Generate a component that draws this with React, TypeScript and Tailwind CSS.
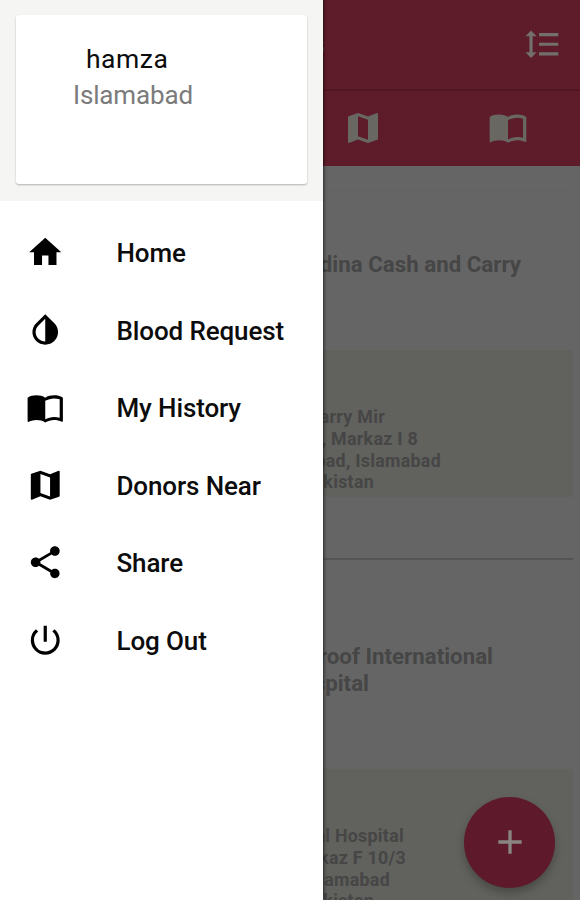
import type { IconType } from "react-icons";
import {
  MdAdd,
  MdFormatLineSpacing,
  MdHome,
  MdImportContacts,
  MdInvertColors,
  MdMap,
  MdPowerSettingsNew,
  MdShare,
} from "react-icons/md";

const menu: { label: string; icon: IconType }[] = [
  { label: "Home", icon: MdHome },
  { label: "Blood Request", icon: MdInvertColors },
  { label: "My History", icon: MdImportContacts },
  { label: "Donors Near", icon: MdMap },
  { label: "Share", icon: MdShare },
  { label: "Log Out", icon: MdPowerSettingsNew },
];

function Drawer() {
  return (
    <aside className="absolute inset-y-0 left-0 w-[323px] bg-white shadow-[1px_0_3px_rgba(0,0,0,0.6)]">
      <div className="h-[201px] bg-[#f5f5f3] px-4 pt-[15px]">
        <div className="h-[169px] rounded-[3px] bg-white pt-[26px] shadow-[0_1px_2px_rgba(0,0,0,0.28)]">
          <p className="pl-[70px] text-[26.5px] leading-9 tracking-[0.5px] text-[#0c0c0c]">hamza</p>
          <p className="pl-[57px] text-[26px] leading-9 tracking-[-0.15px] text-[#7b7b7b]">Islamabad</p>
        </div>
      </div>
      <nav className="pt-[13.5px]">
        {menu.map(({ label, icon: Icon }) => (
          <a key={label} className="flex h-[77.5px] items-center pl-[26px] text-black">
            <Icon className="mb-[2px] size-[38.5px] shrink-0" />
            <span className="pt-px pl-[52px] text-[26px] font-medium tracking-[-0.12px] text-[#0c0c0c]">{label}</span>
          </a>
        ))}
      </nav>
    </aside>
  );
}

function TopBar() {
  return (
    <header className="h-[166px] bg-[#5e1c2a] text-[#696762]">
      <div className="flex h-[91px] items-center justify-between border-b-2 border-[#521624] pr-[19px]">
        <h1 className="w-[325px] text-right text-[28px] font-medium">Blood Requests</h1>
        <MdFormatLineSpacing className="size-[38.5px] text-[#726f6c]" />
      </div>
      <div className="flex h-[75px] items-center pl-[343px]">
        <MdMap className="mb-[2px] size-10" />
        <MdImportContacts className="mb-[3px] ml-[105px] size-10" />
      </div>
    </header>
  );
}

export default function App() {
  return (
    <div className="relative h-[900px] w-[580px] overflow-hidden bg-[#656565] font-['Roboto',sans-serif]">
      <TopBar />
      <main className="font-bold text-[#464646]">
        <section className="mt-6 mr-[7px] h-[370px] border-t border-b-2 border-t-[#626262] border-b-[#545454] pt-[60px]">
          <h2 className="h-[99px] text-[22.3px] leading-[27px]">
            <p className="w-[521px] text-right">Madina Cash and Carry</p>
          </h2>
          <div className="h-[147px] bg-[#61615d] pt-14 text-[17.8px] leading-[21.8px] tracking-[0.3px]">
            <p className="w-[385px] text-right">Cash and Carry Mir</p>
            <p className="w-[418px] text-right">Chowk, Markaz I 8</p>
            <p className="w-[441px] text-right">Islamabad, Islamabad</p>
            <p className="w-[374px] text-right">Pakistan</p>
          </div>
        </section>
        <section className="mt-[22px] mr-[7px] h-[370px] pt-[61px]">
          <h2 className="h-[126px] text-[22.3px] leading-[27px]">
            <p className="w-[493px] text-right">Maroof International</p>
            <p className="w-[369px] text-right">Hospital</p>
          </h2>
          <div className="h-[147px] bg-[#61615d] pt-14 text-[17.8px] leading-[21.8px] tracking-[0.3px]">
            <p className="w-[404px] text-right">International Hospital</p>
            <p className="w-[406px] text-right">Markaz F 10/3</p>
            <p className="w-[390px] text-right">Islamabad</p>
            <p className="w-[374px] text-right">Pakistan</p>
          </div>
        </section>
      </main>
      <button className="absolute top-[797px] left-[464px] flex size-[91px] items-center justify-center rounded-full bg-[#5e1a2a] text-[#898583] shadow-[0_5px_8px_rgba(0,0,0,0.25)]">
        <MdAdd className="mb-px size-10" />
      </button>
      <Drawer />
    </div>
  );
}
